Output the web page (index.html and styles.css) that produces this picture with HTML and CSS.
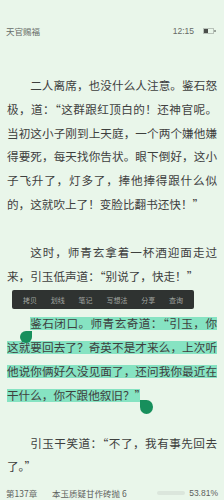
FILE: index.html
```html
<!DOCTYPE html>
<html lang="zh-CN">
<head>
<meta charset="utf-8">
<link rel="stylesheet" href="styles.css">
</head>
<body>
<div class="page">
  <div class="status">
    <span class="book">天官赐福</span>
    <span class="right">
      <span class="time">12:15</span>
      <span class="battery"><span class="level"></span></span>
    </span>
  </div>

  <div class="content">
    <div class="para">
      <div class="ln ind">二人离席，也没什么人注意。鉴石怒</div>
      <div class="ln">极，道：“这群跟红顶白的！还神官呢。</div>
      <div class="ln">当初这小子刚到上天庭，一个两个嫌他嫌</div>
      <div class="ln">得要死，每天找你告状。眼下倒好，这小</div>
      <div class="ln">子飞升了，灯多了，捧他捧得跟什么似</div>
      <div class="ln end">的，这就吹上了！变脸比翻书还快！”</div>
    </div>
    <div class="para">
      <div class="ln ind">这时，师青玄拿着一杯酒迎面走过</div>
      <div class="ln end">来，引玉低声道：“别说了，快走！”</div>
    </div>
    <div class="para">
      <div class="ln ind"><span class="hl">鉴石闭口。师青玄奇道：“引玉，你</span></div>
      <div class="ln"><span class="hl">这就要回去了？奇英不是才来么，上次听</span></div>
      <div class="ln"><span class="hl">他说你俩好久没见面了，还问我你最近在</span></div>
      <div class="ln end"><span class="hl">干什么，你不跟他叙旧？<span class="q">”</span></span></div>
    </div>
    <div class="para">
      <div class="ln ind">引玉干笑道：“不了，我有事先回去</div>
      <div class="ln end">了。”</div>
    </div>
  </div>

  <div class="footer">
    <span class="chap">第137章</span>
    <span class="title">本玉质疑甘作砖抛 6</span>
    <span class="bar"></span>
    <span class="pct">53.81%</span>
  </div>

  <div class="menu">
    <span>拷贝</span>
    <span>划线</span>
    <span>笔记</span>
    <span>写想法</span>
    <span>分享</span>
    <span>查询</span>
  </div>
  <div class="handle start"></div>
  <div class="handle stop"></div>
</div>
</body>
</html>
```

FILE: styles.css
```css
html, body {
  margin: 0;
  padding: 0;
}
body {
  background: #e9f6ea;
  font-family: "Noto Sans CJK SC", "Noto Sans", sans-serif;
  color: #3e403e;
}
.page {
  position: relative;
  width: 224px;
  height: 500px;
  display: flex;
  flex-direction: column;
  overflow: hidden;
}
.status {
  display: flex;
  justify-content: space-between;
  align-items: center;
  padding: 25px 10px 0 6px;
  height: 12px;
  font-size: 8.5px;
  line-height: 12px;
  color: #666a66;
}
.status .right {
  display: flex;
  align-items: center;
  gap: 9px;
}
.time {
  font-family: "Liberation Sans", sans-serif;
}
.battery {
  position: relative;
  width: 9px;
  height: 4px;
  border: 0.5px solid #b8c2b9;
  display: flex;
}
.battery::after {
  content: "";
  position: absolute;
  right: -2.5px;
  top: 1px;
  width: 1.5px;
  height: 2px;
  background: #9aa49b;
}
.battery .level {
  width: 4px;
  background: #4a4d4a;
}
.content {
  margin-top: 37px;
  padding: 0 7px;
  font-size: 11.6px;
  line-height: 23.8px;
}
.para + .para {
  margin-top: 24px;
}
.ln {
  height: 23.8px;
  text-align: justify;
  text-align-last: justify;
  white-space: nowrap;
}
.ln.ind {
  text-indent: 2em;
}
.ln.end {
  text-align-last: left;
}
.hl {
  background: linear-gradient(transparent 10%, #86e3c2 10%, #86e3c2 92%, transparent 92%);
}
.q {
  letter-spacing: -0.55em;
}
.footer {
  margin-top: auto;
  display: flex;
  align-items: center;
  height: 12px;
  padding: 0 6px 1px 6px;
  font-size: 8.5px;
  line-height: 12px;
  color: #5d615d;
}
.chap {
  width: 46px;
}
.title {
  flex: 1;
}
.bar {
  width: 28px;
  height: 4px;
  border-radius: 2px;
  background: #dbe6dc;
  margin-right: 4px;
}
.pct {
  font-family: "Liberation Sans", sans-serif;
}
.menu {
  position: absolute;
  left: 12px;
  top: 290px;
  width: 182px;
  height: 19px;
  background: #2f3331;
  border-radius: 2px;
  display: flex;
  justify-content: space-around;
  align-items: center;
  font-size: 7px;
  color: #a0a4a0;
  padding: 0 4px;
  box-sizing: border-box;
}
.handle {
  position: absolute;
  width: 12px;
  height: 12px;
  background: #178f5c;
  border-radius: 50%;
}
.handle.start {
  left: 20px;
  top: 331px;
  border-top-right-radius: 0;
}
.handle.stop {
  left: 140px;
  top: 400px;
  width: 13px;
  height: 14px;
  border-top-left-radius: 0;
}
```
